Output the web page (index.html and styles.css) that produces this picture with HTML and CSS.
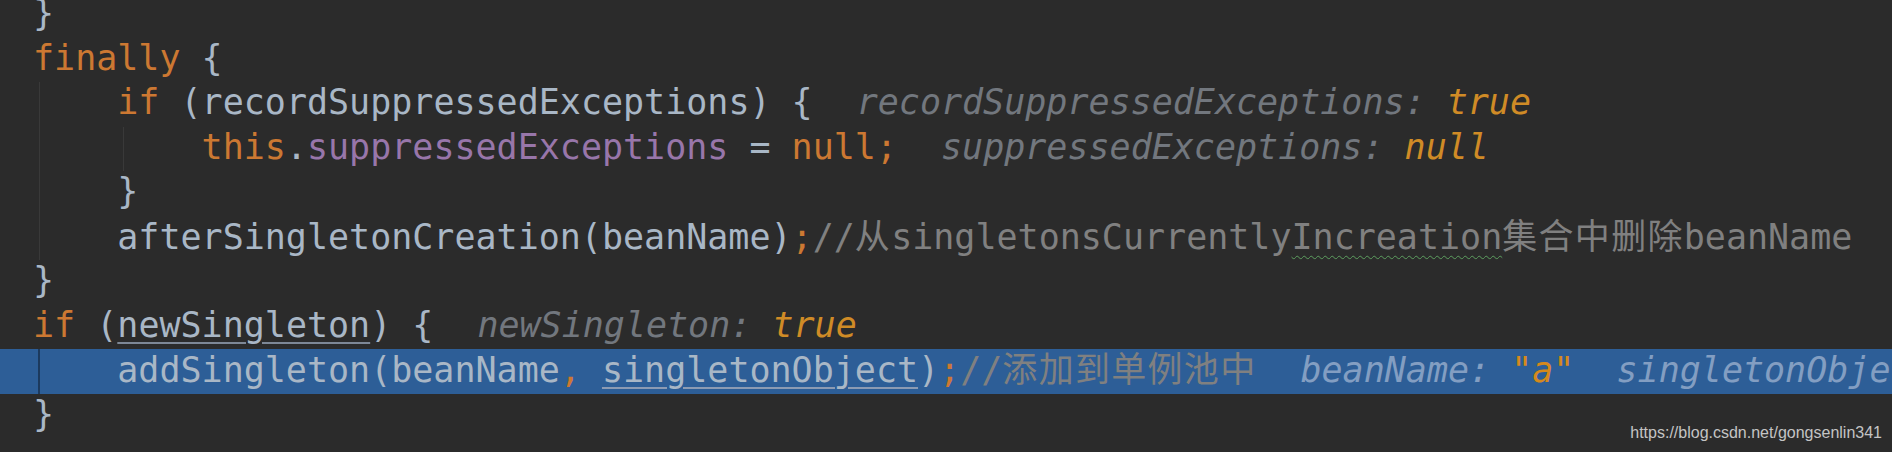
FILE: index.html
```html
<!DOCTYPE html>
<html>
<head>
<meta charset="utf-8">
<link rel="stylesheet" href="styles.css">
</head>
<body>
<div class="editor">
  <div class="code">
    <div class="ln">}</div>
    <div class="ln"><span class="kw">finally</span> {</div>
    <div class="ln g1">    <span class="kw">if</span> (recordSuppressedExceptions) {<span class="dbg"><span class="dn">recordSuppressedExceptions: </span><span class="dv">true</span></span></div>
    <div class="ln g1 g2">        <span class="kw">this</span>.<span class="fd">suppressedExceptions</span> = <span class="kw">null</span><span class="kw">;</span><span class="dbg"><span class="dn">suppressedExceptions: </span><span class="dv">null</span></span></div>
    <div class="ln g1">    }</div>
    <div class="ln g1">    afterSingletonCreation(beanName)<span class="kw">;</span><span class="cm">//<span class="cj">从</span>singletonsCurrently<span class="typo">Increation</span><span class="cj">集合中删除</span>beanName</span></div>
    <div class="ln">}</div>
    <div class="ln"><span class="kw">if</span> (<span class="re">newSingleton</span>) {<span class="dbg"><span class="dn">newSingleton: </span><span class="dv">true</span></span></div>
    <div class="ln hl">    addSingleton(beanName<span class="kw">,</span> <span class="re">singletonObject</span>)<span class="kw">;</span><span class="cm">//<span class="cj">添加到单例池中</span></span><span class="dbg"><span class="dn">beanName: </span><span class="dv">"a"</span><span class="dn">  singletonObject: DefaultListableBeanFactory</span></span></div>
    <div class="ln">}</div>
  </div>
  <div class="mark">https://blog.csdn.net/gongsenlin341</div>
</div>
</body>
</html>
```
FILE: styles.css
```css
html, body {
  margin: 0;
  padding: 0;
  background: #2b2b2b;
  overflow: hidden;
}

.editor {
  position: relative;
  width: 1892px;
  height: 452px;
  overflow: hidden;
  background: #2b2b2b;
}

.code {
  margin-top: -7px;
  font-family: "DejaVu Sans Mono", "Noto Sans CJK SC", monospace;
  font-size: 35px;
  color: #a9b7c6;
}

.ln {
  box-sizing: border-box;
  height: 44.5px;
  line-height: 40.5px;
  padding-bottom: 4px;
  padding-left: 33px;
  white-space: pre;
  overflow: visible;
}

.g1 {
  background-image: linear-gradient(#393939, #393939);
  background-size: 1px 100%;
  background-position: 39px 0;
  background-repeat: no-repeat;
}

.g1.g2 {
  background-image: linear-gradient(#393939, #393939), linear-gradient(#393939, #393939);
  background-size: 1px 100%, 1px 100%;
  background-position: 39px 0, 123px 0;
  background-repeat: no-repeat;
}

.hl {
  background-color: #2d5e97;
  background-image: linear-gradient(#1c3a5e, #1c3a5e);
  background-size: 2px 100%;
  background-position: 38px 0;
  background-repeat: no-repeat;
}

.kw { color: #cc7832; }
.fd { color: #9876aa; }
.cm { color: #808080; }

.cj {
  font-family: "Noto Sans CJK SC", sans-serif;
  font-size: 35px;
  letter-spacing: 1.3px;
  line-height: 1;
}

.typo {
  text-decoration: underline wavy #5d9e5f;
  text-decoration-thickness: 1px;
  text-underline-offset: 6px;
}

.re {
  text-decoration: underline;
  text-decoration-color: #7e8896;
  text-decoration-thickness: 1.5px;
  text-underline-offset: 5px;
}

.hl .re { text-decoration-color: #8c9bb3; }

.dbg {
  margin-left: 44px;
  font-style: italic;
}

.dn { color: #72777e; }
.dv { color: #d08b26; }
.hl .dn { color: #839ec2; }
.hl .dv { color: #d5891c; }

.mark {
  position: absolute;
  right: 10px;
  bottom: 10px;
  font-family: "Liberation Sans", Arial, sans-serif;
  font-size: 16px;
  color: #c4c4c4;
}
```
